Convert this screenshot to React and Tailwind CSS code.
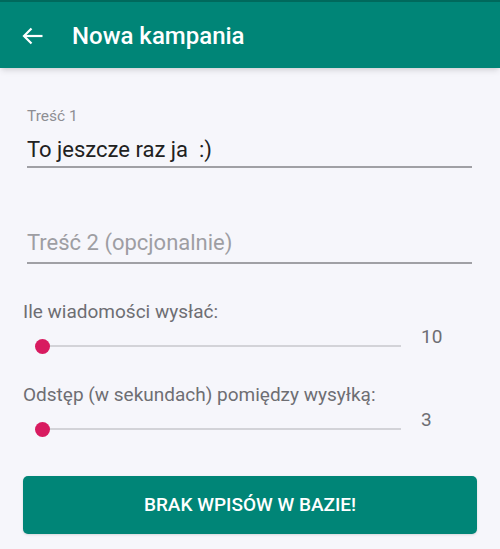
import React from "react";

const font = { fontFamily: "Roboto, 'Noto Sans', sans-serif" };

const Slider = ({ value, label }) => (
  <div className="mt-[3px]">
    <div className="pl-[23px] text-[19px] leading-[22px] text-[#6e6e73]">{label}</div>
    <div className="flex items-start mt-[3px]">
      {/* track + thumb */}
      <div className="relative ml-[42px] mt-[12px] h-[16px] w-[359px]">
        <div className="absolute left-0 right-0 top-[7px] h-[2px] bg-[#d3d3d8]" />
        <div className="absolute left-[-7.5px] top-[0.5px] h-[15px] w-[15px] rounded-full bg-[#d81b60]" />
      </div>
      <span className="ml-[20px] text-[19px] leading-[22px] text-[#6e6e73]">{value}</span>
    </div>
  </div>
);

export default function App() {
  return (
    <div className="w-[500px] h-[549px] bg-[#f6f6fb] overflow-hidden" style={font}>
      {/* App bar */}
      <div className="relative z-10 bg-[#008577] shadow-md">
        <div className="h-[2px] bg-[#00695c]" />
        <div className="flex h-[66px] items-center pl-[22px] pt-[2px]">
          <svg width="21" height="18" viewBox="0 0 21 18" fill="none" stroke="white" strokeWidth="2.2">
            <path d="M20.5 9H2" />
            <path d="M9.5 1.5L2 9l7.5 7.5" />
          </svg>
          <h1 className="ml-[29px] text-[24px] font-medium text-white">Nowa kampania</h1>
        </div>
      </div>

      {/* Treść 1 */}
      <div className="pl-[27px] pr-[28px] pt-[39px]">
        <div className="text-[15.5px] leading-[18px] text-[#8e8e93]">Treść 1</div>
        <div className="mt-[12px] border-b-2 border-[#a0a0a5] pb-[3px] text-[22px] leading-[26px] text-[#212121]">
          To jeszcze raz ja&nbsp;&nbsp;:)
        </div>
      </div>

      {/* Treść 2 */}
      <div className="pl-[27px] pr-[28px] pt-[62px]">
        <div className="border-b-2 border-[#a0a0a5] pb-[6px] text-[22px] leading-[26px] text-[#9e9ea3]">
          Treść 2 (opcjonalnie)
        </div>
      </div>

      <div className="mt-[37px]">
        <Slider label="Ile wiadomości wysłać:" value="10" />
      </div>
      <div className="mt-[30px]">
        <Slider label="Odstęp (w sekundach) pomiędzy wysyłką:" value="3" />
      </div>

      <div className="px-[23px] mt-[39px]">
        <button className="flex h-[58px] w-full items-center justify-center rounded-[5px] bg-[#008577] text-[19px] font-medium text-white shadow-sm">
          BRAK WPISÓW W BAZIE!
        </button>
      </div>
    </div>
  );
}
